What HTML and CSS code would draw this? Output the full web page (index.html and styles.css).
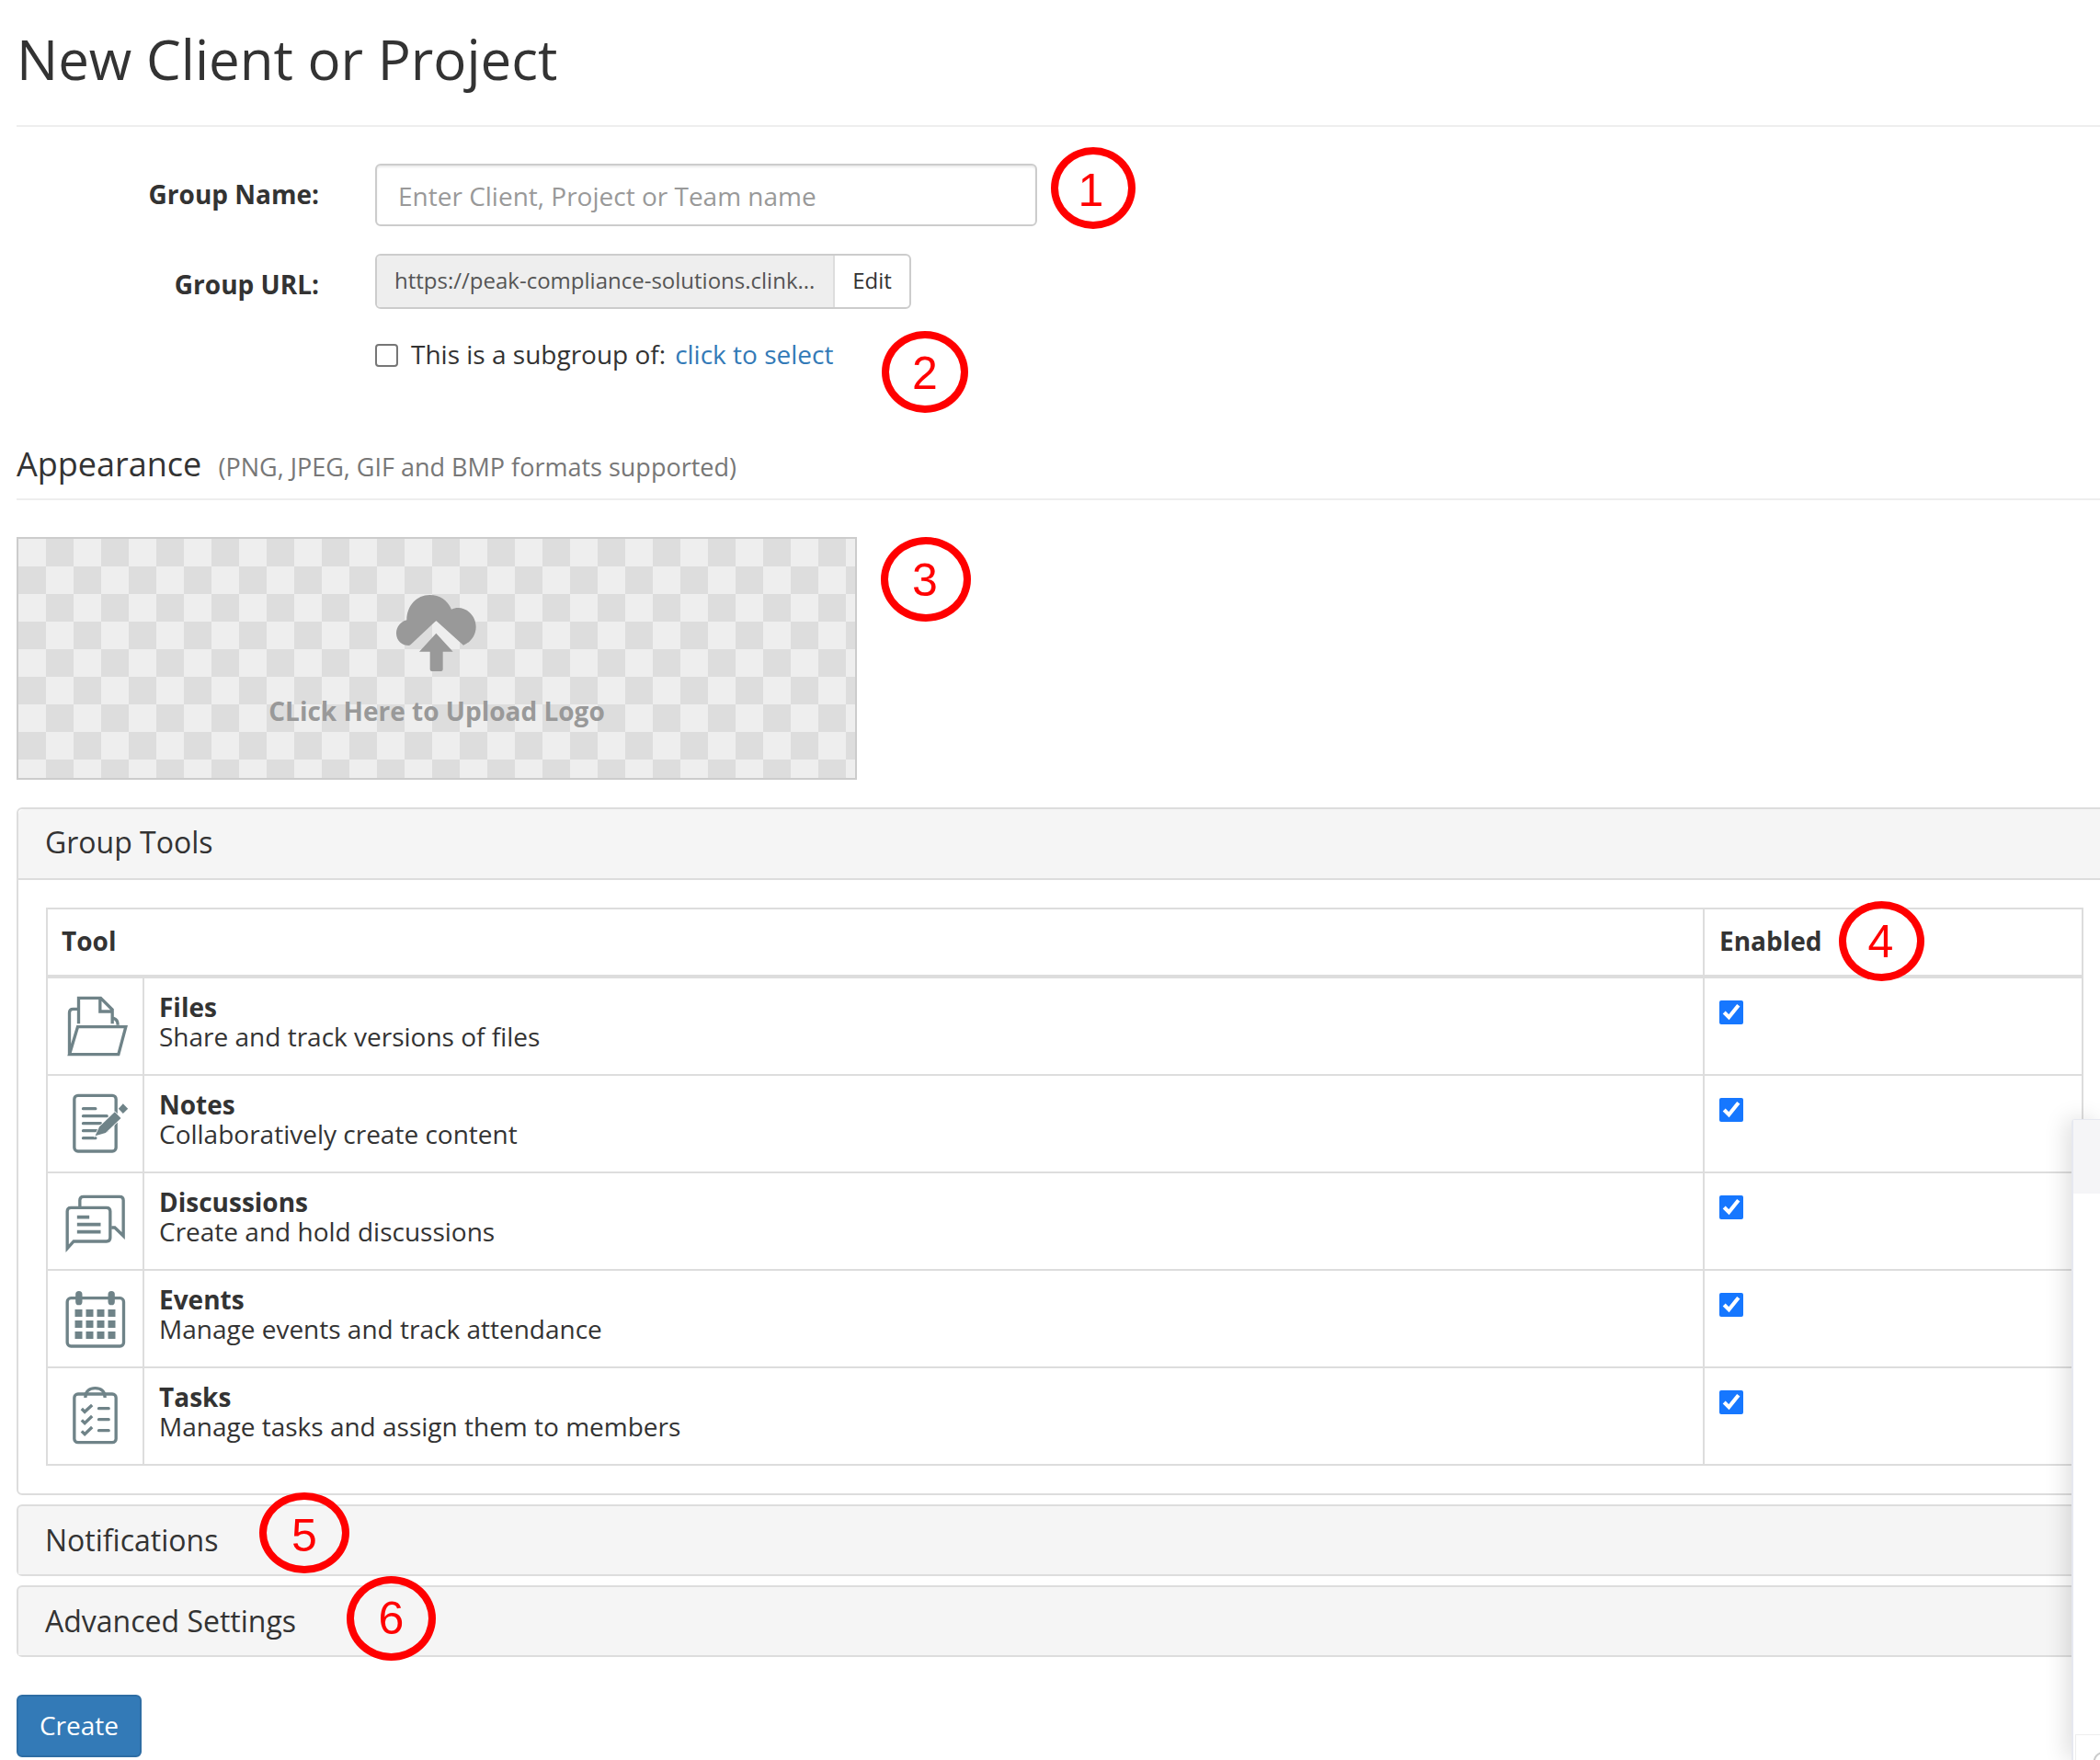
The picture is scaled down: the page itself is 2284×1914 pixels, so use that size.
FILE: index.html
```html
<!DOCTYPE html>
<html lang="en">
<head>
<meta charset="utf-8">
<title>New Client or Project</title>
<link rel="stylesheet" href="styles.css">
</head>
<body>
<div class="page">
  <h1 class="title">New Client or Project</h1>
  <form class="form">
    <div class="form-row name-row">
      <label class="form-label" for="group-name">Group Name:</label>
      <input class="text-input" id="group-name" type="text" placeholder="Enter Client, Project or Team name">
    </div>
    <div class="form-row url-row">
      <label class="form-label">Group URL:</label>
      <div class="url-group">
        <span class="url-value">https://peak-compliance-solutions.clink...</span>
        <span class="url-edit">Edit</span>
      </div>
    </div>
    <div class="form-row sub-row">
      <span class="form-label"></span>
      <input class="sub-check" type="checkbox">
      <span class="sub-text">This is a subgroup of:</span>
      <a class="sub-link" href="#">click to select</a>
    </div>

    <div class="section-head">
      <span class="section-title">Appearance</span>
      <span class="section-note">(PNG, JPEG, GIF and BMP formats supported)</span>
    </div>

    <div class="upload">
      <svg class="upload-icon" viewBox="150 80 270 255" aria-hidden="true">
        <path d="M200 245L283 167L372 247C395 238 413 215 413 187C413 152 385 125 355 125C347 125 340 127 333 130C320 100 295 83 262 83C220 83 187 118 187 165C167 170 153 188 153 208C153 232 172 248 195 248Z"/>
        <path d="M283 208L338 268H305V326Q305 332 299 332H269Q263 332 263 326V268H228Z"/>
      </svg>
      <span class="upload-text">CLick Here to Upload Logo</span>
    </div>

    <section class="panel">
      <div class="panel-head">Group Tools</div>
      <div class="panel-body">
        <table class="tools">
          <colgroup><col class="col-icon"><col class="col-tool"><col class="col-on"></colgroup>
          <thead>
            <tr><th colspan="2">Tool</th><th>Enabled</th></tr>
          </thead>
          <tbody>
            <tr>
              <td class="icon-cell">
                <svg class="tool-icon" viewBox="9 12 306 312" aria-hidden="true">
                  <path d="M105 112H90Q78 112 78 124V260M105 170H262L238 260H78L105 170ZM108 160V76H180L218 114V160M178 78V120H218M222 142Q236 146 236 164"/>
                </svg>
              </td>
              <td class="tool-cell"><strong>Files</strong><span>Share and track versions of files</span></td>
              <td class="on-cell"><input class="on-check" type="checkbox" checked></td>
            </tr>
            <tr>
              <td class="icon-cell">
                <svg class="tool-icon" viewBox="9 330 306 312" aria-hidden="true">
                  <rect x="94" y="394" width="136" height="182" rx="12"/>
                  <path class="round" d="M123 437H163M123 461H200M123 485H180M123 509H200M123 533H163"/>
                  <path class="pencil" d="M162 526L176 496L226 448L246 468L196 516Z"/>
                  <path class="solid" d="M238 437L253 421L269 437L253 453Z"/>
                </svg>
              </td>
              <td class="tool-cell"><strong>Notes</strong><span>Collaboratively create content</span></td>
              <td class="on-cell"><input class="on-check" type="checkbox" checked></td>
            </tr>
            <tr>
              <td class="icon-cell">
                <svg class="tool-icon" viewBox="9 -12 306 312" aria-hidden="true">
                  <path d="M112 96V76Q112 64 124 64H242Q254 64 254 76V192L226 165H215"/>
                  <path d="M71 233V112Q71 100 83 100H199Q211 100 211 112V198Q211 210 199 210H92Z"/>
                  <path class="thick" d="M103 131H143M103 155H180M103 179H180"/>
                </svg>
              </td>
              <td class="tool-cell"><strong>Discussions</strong><span>Create and hold discussions</span></td>
              <td class="on-cell"><input class="on-check" type="checkbox" checked></td>
            </tr>
            <tr>
              <td class="icon-cell">
                <svg class="tool-icon" viewBox="9 306 306 312" aria-hidden="true">
                  <rect x="71" y="395" width="184" height="157" rx="12"/>
                  <g class="solid">
                    <rect x="98" y="372" width="22" height="46" rx="11"/><rect x="204" y="372" width="22" height="46" rx="11"/>
                    <rect x="96" y="432" width="24" height="24"/><rect x="132" y="432" width="24" height="24"/><rect x="168" y="432" width="24" height="24"/><rect x="204" y="432" width="24" height="24"/>
                    <rect x="96" y="468" width="24" height="24"/><rect x="132" y="468" width="24" height="24"/><rect x="168" y="468" width="24" height="24"/><rect x="204" y="468" width="24" height="24"/>
                    <rect x="96" y="504" width="24" height="24"/><rect x="132" y="504" width="24" height="24"/><rect x="168" y="504" width="24" height="24"/><rect x="204" y="504" width="24" height="24"/>
                  </g>
                </svg>
              </td>
              <td class="tool-cell"><strong>Events</strong><span>Manage events and track attendance</span></td>
              <td class="on-cell"><input class="on-check" type="checkbox" checked></td>
            </tr>
            <tr>
              <td class="icon-cell">
                <svg class="tool-icon" viewBox="9 624 306 312" aria-hidden="true">
                  <rect x="94" y="708" width="136" height="158" rx="12"/>
                  <path d="M130 720C130 698 145 689 162 689C180 689 194 698 194 720"/>
                  <path d="M118 756L128 766L152 744M118 793L128 803L152 780M118 829L128 839L152 816"/>
                  <path class="round" d="M174 755H206M174 791H206M174 827H206"/>
                </svg>
              </td>
              <td class="tool-cell"><strong>Tasks</strong><span>Manage tasks and assign them to members</span></td>
              <td class="on-cell"><input class="on-check" type="checkbox" checked></td>
            </tr>
          </tbody>
        </table>
      </div>
    </section>

    <section class="panel panel-closed"><div class="panel-head">Notifications</div></section>
    <section class="panel panel-closed"><div class="panel-head">Advanced Settings</div></section>

    <button class="create" type="button">Create</button>
  </form>
</div>

<span class="callout c1">1</span>
<span class="callout c2">2</span>
<span class="callout c3">3</span>
<span class="callout c4">4</span>
<span class="callout c5">5</span>
<span class="callout c6">6</span>

<aside class="drawer">
  <div class="drawer-head"></div>
  <div class="drawer-foot">
    <svg class="drawer-arc" viewBox="0 0 20 20" aria-hidden="true"><path d="M2 20Q2 4 18 2"/></svg>
  </div>
</aside>
</body>
</html>
```

FILE: styles.css
```css
html, body {
  margin: 0;
  padding: 0;
  height: 100%;
  overflow: hidden;
  background: #fff;
}

body {
  position: relative;
  font-family: "Open Sans", "Noto Sans", sans-serif;
  font-size: 28px;
  line-height: 32px;
  color: #333;
}

.page {
  box-sizing: border-box;
  margin-left: 18px;
  width: 2279px;
}

.title {
  margin: 0;
  height: 136px;
  padding-top: 26px;
  box-sizing: border-box;
  font-size: 60px;
  line-height: 76px;
  font-weight: 400;
}

.form {
  border-top: 2px solid #eee;
  margin: 0;
}

.form-row {
  display: flex;
  align-items: center;
}

.form-label {
  flex: 0 0 329px;
  margin-right: 61px;
  text-align: right;
  font-weight: 700;
}

.name-row {
  margin-top: 40px;
  height: 68px;
}

.name-row .form-label {
  position: relative;
  top: -1px;
}

.text-input {
  box-sizing: border-box;
  width: 720px;
  height: 68px;
  padding: 2px 23px 0;
  border: 2px solid #ccc;
  border-radius: 6px;
  box-shadow: inset 0 2px 2px rgba(0, 0, 0, .08);
  font: 400 28px "Open Sans", sans-serif;
  color: #333;
}

.text-input::placeholder {
  color: #999;
  opacity: 1;
}

.url-row {
  margin-top: 30px;
  height: 60px;
}

.url-row .form-label {
  position: relative;
  top: 3px;
}

.url-group {
  display: flex;
  box-sizing: border-box;
  width: 583px;
  height: 60px;
  border: 2px solid #ccc;
  border-radius: 6px;
  font-size: 24px;
  line-height: 54px;
  overflow: hidden;
}

.url-value {
  box-sizing: border-box;
  flex: 0 0 496px;
  padding-left: 19px;
  background: #eee;
  color: #555;
  white-space: nowrap;
}

.url-edit {
  flex: 1;
  text-align: center;
  border-left: 2px solid #ddd;
  color: #333;
}

.sub-row {
  margin-top: 32px;
  height: 36px;
}

.sub-check {
  flex: none;
  appearance: none;
  box-sizing: border-box;
  width: 25px;
  height: 25px;
  margin: 0 14px 0 0;
  border: 2px solid #767676;
  border-radius: 4px;
  background: #fff;
}

.sub-text {
  position: relative;
  top: -1px;
  margin-right: 10px;
}

.sub-link {
  position: relative;
  top: -1px;
  color: #337ab7;
  text-decoration: none;
}

.section-head {
  box-sizing: border-box;
  height: 140px;
  padding-top: 78px;
  border-bottom: 2px solid #eee;
  white-space: nowrap;
}

.section-title {
  font-size: 36px;
  line-height: 46px;
  margin-right: 11px;
}

.section-note {
  font-size: 27px;
  color: #777;
}

.upload {
  box-sizing: border-box;
  position: relative;
  display: flex;
  flex-direction: column;
  align-items: center;
  width: 914px;
  height: 264px;
  margin-top: 40px;
  padding-top: 60px;
  border: 2px solid #ccc;
  background: repeating-conic-gradient(#ddd 0 25%, #eee 0 50%) 0 0 / 60px 60px;
}

.upload-icon {
  width: 90px;
  height: 85px;
  fill: #999;
}

.upload-text {
  margin-top: 26px;
  font-weight: 700;
  color: #999;
}

.panel {
  box-sizing: border-box;
  margin-top: 30px;
  border: 2px solid #ddd;
  border-radius: 6px;
}

.panel-closed {
  margin-top: 10px;
  height: 78px;
  background: #f5f5f5;
}

.panel-head {
  box-sizing: border-box;
  height: 77px;
  padding: 0 29px;
  background: #f5f5f5;
  border-bottom: 2px solid #ddd;
  border-radius: 6px 6px 0 0;
  font-size: 32px;
  line-height: 72px;
}

.panel-closed .panel-head {
  height: 74px;
  border-bottom: 0;
  line-height: 74px;
}

.panel-body {
  padding: 30px;
}

.tools {
  box-sizing: border-box;
  table-layout: fixed;
  width: 2216px;
  border-collapse: separate;
  border-spacing: 0;
  border-top: 2px solid #ddd;
  border-left: 2px solid #ddd;
}

.col-icon { width: 105px; }
.col-on { width: 412px; }

.tools th {
  box-sizing: border-box;
  height: 75px;
  padding: 0 15px 3px;
  text-align: left;
  font-weight: 700;
  line-height: 32px;
  border-right: 2px solid #ddd;
  border-bottom: 4px solid #ddd;
}

.tools th + th {
  padding-left: 16px;
}

.tools td {
  box-sizing: border-box;
  height: 106px;
  padding: 0;
  vertical-align: top;
  border-right: 2px solid #ddd;
  border-bottom: 2px solid #ddd;
}

.tool-icon {
  display: block;
  width: 103px;
  height: 104px;
  fill: none;
  stroke: #6f8388;
  stroke-width: 10;
}

.tool-icon .round {
  stroke-linecap: round;
}

.tool-icon .thick {
  stroke-width: 11;
}

.tool-icon .solid {
  fill: #6f8388;
  stroke: none;
}

.tool-icon .pencil {
  fill: #6f8388;
  stroke: #fff;
  stroke-width: 5;
  paint-order: stroke;
}

.tools td.tool-cell {
  padding: 15px 16px 0;
}

.tool-cell strong,
.tool-cell span {
  display: block;
}

.tools td.on-cell {
  padding: 24px 16px 0;
}

.on-check {
  display: block;
  width: 26px;
  height: 26px;
  margin: 0;
  accent-color: #1677ff;
}

.create {
  display: block;
  box-sizing: border-box;
  width: 136px;
  height: 68px;
  margin-top: 41px;
  padding: 0 0 2px;
  border: 2px solid #2e6da4;
  border-radius: 6px;
  background: #337ab7;
  color: #fff;
  font: 400 28px "Open Sans", sans-serif;
}

.callout {
  position: absolute;
  box-sizing: border-box;
  display: flex;
  align-items: center;
  justify-content: center;
  border: 8px solid #f00;
  border-radius: 50%;
  color: #f00;
  font-family: "Liberation Sans", Arial, sans-serif;
  font-size: 50px;
  line-height: 1;
}

.c1 { left: 1143px; top: 160px; width: 92px; height: 89px; padding: 5px 5px 0 0; }
.c2 { left: 959px; top: 360px; width: 94px; height: 89px; padding-top: 2px; }
.c3 { left: 958px; top: 584px; width: 98px; height: 92px; padding: 2px 2px 0 0; }
.c4 { left: 2000px; top: 980px; width: 93px; height: 87px; padding-right: 2px; }
.c5 { left: 282px; top: 1623px; width: 98px; height: 88px; padding-top: 6px; }
.c6 { left: 377px; top: 1714px; width: 97px; height: 92px; }

.drawer {
  position: absolute;
  left: 2253px;
  top: 1217px;
  right: 0;
  bottom: 0;
  background: #fff;
  border-left: 2px solid #e6e8f0;
  border-top: 1px solid #e6e8f0;
  border-top-left-radius: 4px;
  box-shadow: -6px 0 24px rgba(0, 0, 0, .13);
}

.drawer-head {
  height: 80px;
  background: #f5f5f7;
}

.drawer-foot {
  position: absolute;
  left: 2px;
  right: 0;
  bottom: 0;
  height: 27px;
  border-top: 1px solid #eee;
  border-left: 1px solid #eee;
}

.drawer-arc {
  position: absolute;
  left: 18px;
  top: 17px;
  width: 14px;
  height: 14px;
  fill: none;
  stroke: #ccc;
  stroke-width: 3;
}
```
